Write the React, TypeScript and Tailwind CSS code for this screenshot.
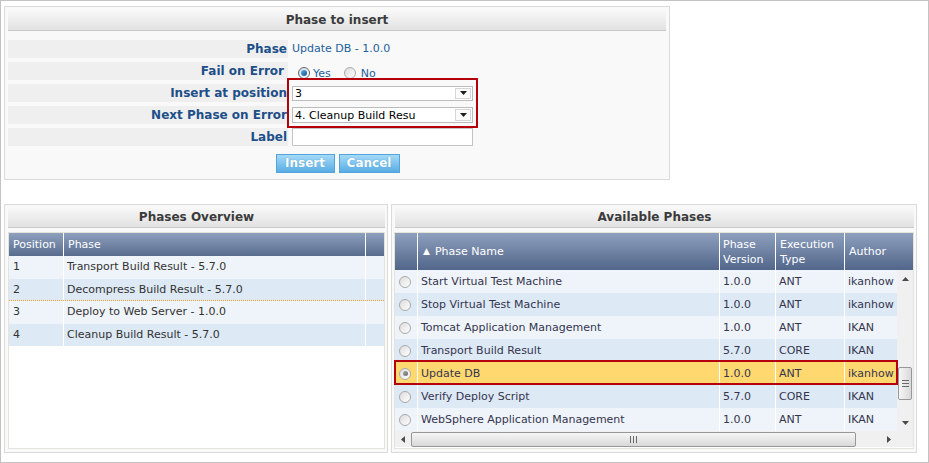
import React from 'react'

type Phase = { name: string; version: string; type: string; author: string; selected?: boolean }

const overview: [string, string][] = [
  ['1', 'Transport Build Result - 5.7.0'],
  ['2', 'Decompress Build Result - 5.7.0'],
  ['3', 'Deploy to Web Server - 1.0.0'],
  ['4', 'Cleanup Build Result - 5.7.0'],
]

const phases: Phase[] = [
  { name: 'Start Virtual Test Machine', version: '1.0.0', type: 'ANT', author: 'ikanhow' },
  { name: 'Stop Virtual Test Machine', version: '1.0.0', type: 'ANT', author: 'ikanhow' },
  { name: 'Tomcat Application Management', version: '1.0.0', type: 'ANT', author: 'IKAN' },
  { name: 'Transport Build Result', version: '5.7.0', type: 'CORE', author: 'IKAN' },
  { name: 'Update DB', version: '1.0.0', type: 'ANT', author: 'ikanhow', selected: true },
  { name: 'Verify Deploy Script', version: '5.7.0', type: 'CORE', author: 'IKAN' },
  { name: 'WebSphere Application Management', version: '1.0.0', type: 'ANT', author: 'IKAN' },
]

const PanelHeader: React.FC<{ title: string }> = ({ title }) => (
  <div className="h-[20px] shrink-0 border-b border-[#c8c8c8] bg-gradient-to-b from-[#f7f7f7] to-[#e2e2e2] text-center text-[12px] font-bold leading-[19px] text-[#3b3b3b]">
    {title}
  </div>
)

const Radio: React.FC<{ checked?: 'blue' | 'gray' }> = ({ checked }) => (
  <span
    className={
      checked === 'blue'
        ? 'flex size-[12px] shrink-0 items-center justify-center rounded-full border border-[#5b6470] bg-gradient-to-br from-[#d8dde3] to-white'
        : 'flex size-[12px] shrink-0 items-center justify-center rounded-full border border-[#a9a9a9] bg-gradient-to-br from-[#dcdcdc] to-white'
    }
  >
    {checked === 'blue' && <span className="size-[6px] rounded-full bg-gradient-to-br from-[#5fb3ec] to-[#11508f]" />}
    {checked === 'gray' && <span className="size-[5px] rounded-full bg-gradient-to-br from-[#a8a8a8] to-[#6b6b6b]" />}
  </span>
)

const Arrow: React.FC<{ dir: 'up' | 'down' | 'left' | 'right'; color?: string }> = ({ dir, color = '#4a4a4a' }) => {
  const d = {
    up: 'M3.5 0L7 4H0z',
    down: 'M0 0h7L3.5 4z',
    left: 'M4 0v7L0 3.5z',
    right: 'M0 0l4 3.5L0 7z',
  }[dir]
  const vertical = dir === 'up' || dir === 'down'
  return (
    <svg width={vertical ? 7 : 4} height={vertical ? 4 : 7} viewBox={vertical ? '0 0 7 4' : '0 0 4 7'}>
      <path d={d} fill={color} />
    </svg>
  )
}

const SelectBox: React.FC<{ value: string; h: string }> = ({ value, h }) => (
  <div className={`flex ${h} w-[181px] items-center border border-[#bcbcbc] bg-white`}>
    <span className="flex-1 pl-[2px] text-[11px] leading-[13px] text-black">{value}</span>
    <span className="mr-[1px] flex h-[calc(100%-2px)] w-[16px] items-center justify-center border border-[#d6d6d6] bg-[#fbfbfb]">
      <Arrow dir="down" color="#1e1e1e" />
    </span>
  </div>
)

const FormRow: React.FC<{ label: string; pr?: string; children: React.ReactNode }> = ({ label, pr = 'pr-[1px]', children }) => (
  <div className="flex h-[18px] gap-[3px]">
    <div className={`w-[280px] shrink-0 bg-[#efefef] text-right text-[12px] font-bold leading-[18px] text-[#1d4f88] ${pr}`}>{label}</div>
    <div className="flex flex-1 items-center pl-[1px]">{children}</div>
  </div>
)

const Button: React.FC<{ label: string; w: string }> = ({ label, w }) => (
  <button
    type="button"
    className={`h-[19px] ${w} border border-[#54a3da] bg-gradient-to-b from-[#a3daf7] to-[#58ade4] text-[12px] font-bold leading-[17px] text-white [text-shadow:0_0_1px_#3f8fc6]`}
  >
    {label}
  </button>
)

const PhaseToInsert: React.FC = () => (
  <div className="relative ml-[3px] mt-[5px] h-[174px] w-[666px] border border-[#dadada] bg-[#f9f9f9] px-[3px] pt-[4px]">
    <PanelHeader title="Phase to insert" />
    <div className="mt-[9px] flex flex-col gap-[4px]">
      <FormRow label="Phase">
        <span className="text-[11px] leading-[18px] text-[#23609c]">Update DB - 1.0.0</span>
      </FormRow>
      <FormRow label="Fail on Error" pr="pr-[4px]">
        <div className="flex h-full items-end text-[11px] text-[#23609c]">
          <span className="mb-[1px] ml-[6px]">
            <Radio checked="blue" />
          </span>
          <span className="ml-[3px] leading-[12px]">Yes</span>
          <span className="mb-[1px] ml-[13px]">
            <Radio />
          </span>
          <span className="ml-[5px] leading-[12px]">No</span>
        </div>
      </FormRow>
      <FormRow label="Insert at position">
        <SelectBox value="3" h="h-[15px]" />
      </FormRow>
      <FormRow label="Next Phase on Error">
        <SelectBox value="4. Cleanup Build Resu" h="h-[16px]" />
      </FormRow>
      <FormRow label="Label">
        <div className="h-[18px] w-[181px] border border-[#c4c4c4] bg-white" />
      </FormRow>
    </div>
    <div className="mt-[8px] flex justify-center gap-[4px] pl-[1px]">
      <Button label="Insert" w="w-[59px]" />
      <Button label="Cancel" w="w-[61px]" />
    </div>
    {/* highlight round the two drop-downs */}
    <div className="pointer-events-none absolute left-[282px] top-[71px] h-[50px] w-[191px] border-2 border-[#b3000b]" />
  </div>
)

const PhasesOverview: React.FC = () => (
  <div className="flex h-[249px] w-[384px] flex-col border border-[#dadada] bg-[#f9f9f9] pb-[3px] pl-[3px] pr-[2px] pt-[3px]">
    <PanelHeader title="Phases Overview" />
    <div className="mt-[4px] flex-1 border border-[#e4e4da] bg-white">
      <div className="flex h-[23px] bg-gradient-to-b from-[#8ea0be] to-[#586c8e] text-[11px] leading-[23px] text-white">
        <div className="w-[55px] border-r border-white pl-[4px]">Position</div>
        <div className="w-[302px] border-r border-white pl-[4px]">Phase</div>
        <div className="flex-1" />
      </div>
      {overview.map(([pos, name], i) => (
        <div
          key={pos}
          className={
            'flex h-[22.5px] text-[11px] leading-[22px] text-[#333] ' +
            (i % 2 === 0 ? 'bg-[#eff4fa] ' : 'bg-[#dde9f5] ') +
            (i === 1 ? 'border-b border-dotted border-[#eea232]' : '')
          }
        >
          <div className="w-[55px] border-r border-white pl-[4px]">{pos}</div>
          <div className="w-[302px] border-r border-white pl-[3px]">{name}</div>
          <div className="flex-1" />
        </div>
      ))}
    </div>
  </div>
)

const VScrollbar: React.FC = () => (
  <div className="flex w-[16px] shrink-0 flex-col bg-[#f0f0f0]">
    <div className="flex h-[17px] items-center justify-center">
      <Arrow dir="up" />
    </div>
    <div className="mx-[1px] mt-[80px] flex h-[33px] flex-col items-center justify-center gap-[2px] rounded-[2px] border border-[#979797] bg-gradient-to-r from-[#f6f6f6] to-[#d9d9d9]">
      <span className="h-px w-[7px] bg-[#6a6a6a]" />
      <span className="h-px w-[7px] bg-[#6a6a6a]" />
      <span className="h-px w-[7px] bg-[#6a6a6a]" />
    </div>
    <div className="flex-1" />
    <div className="flex h-[17px] items-center justify-center">
      <Arrow dir="down" />
    </div>
  </div>
)

const HScrollbar: React.FC = () => (
  <div className="flex h-[16px] flex-1 items-center bg-[#f0f0f0]">
    <div className="flex w-[16px] items-center justify-center">
      <Arrow dir="left" />
    </div>
    <div className="flex h-[15px] w-[445px] items-center justify-center gap-[2px] rounded-[2px] border border-[#979797] bg-gradient-to-b from-[#f6f6f6] to-[#d9d9d9]">
      <span className="h-[7px] w-px bg-[#6a6a6a]" />
      <span className="h-[7px] w-px bg-[#6a6a6a]" />
      <span className="h-[7px] w-px bg-[#6a6a6a]" />
    </div>
    <div className="flex-1" />
    <div className="flex w-[16px] items-center justify-center">
      <Arrow dir="right" />
    </div>
  </div>
)

const AvailablePhases: React.FC = () => (
  <div className="flex h-[249px] w-[526px] flex-col border border-[#dadada] bg-[#f9f9f9] px-[2px] pb-[3px] pt-[3px]">
    <div className="pl-[1px]">
      <PanelHeader title="Available Phases" />
    </div>
    <div className="mt-[4px] flex flex-1 flex-col border border-[#e4e4da] bg-white">
      <div className="flex h-[37px] bg-gradient-to-b from-[#8ea0be] to-[#52668a] text-[11px] leading-[15px] text-white">
        <div className="w-[23px] border-r border-white" />
        <div className="flex w-[302px] items-center border-r border-white pl-[5px]">
          <span className="mr-[5px] text-[9px]">▲</span>Phase Name
        </div>
        <div className="flex w-[56px] items-center border-r border-white pl-[3px]">
          Phase
          <br />
          Version
        </div>
        <div className="flex w-[69px] items-center border-r border-white pl-[4px]">
          Execution
          <br />
          Type
        </div>
        <div className="flex flex-1 items-center pl-[4px]">Author</div>
      </div>
      <div className="flex">
        <div className="flex w-[502px] flex-col">
          {phases.map((p, i) => (
            <div
              key={p.name}
              className={
                'relative flex h-[23px] text-[11px] leading-[23px] text-[#35354f] ' +
                (p.selected ? 'bg-[#ffd86f]' : i % 2 === 0 ? 'bg-[#eff4fa]' : 'bg-[#dde9f5]')
              }
            >
              <div className="flex w-[23px] items-center justify-center border-r border-white pr-[2px]">
                <Radio checked={p.selected ? 'gray' : undefined} />
              </div>
              <div className="w-[302px] border-r border-white pl-[3px]">{p.name}</div>
              <div className="w-[56px] border-r border-white pl-[3px]">{p.version}</div>
              <div className="w-[69px] border-r border-white pl-[3px]">{p.type}</div>
              <div className="flex-1 whitespace-nowrap pl-[3px]">{p.author}</div>
              {p.selected && (
                <div className="pointer-events-none absolute -left-[1px] -right-[1px] -top-[2px] bottom-0 border-2 border-[#b3000b]" />
              )}
            </div>
          ))}
        </div>
        <VScrollbar />
      </div>
      <div className="flex">
        <HScrollbar />
        <div className="h-[16px] w-[16px] bg-[#f0f0f0]" />
      </div>
    </div>
  </div>
)

const App: React.FC = () => {
  return (
    <div className="h-[463px] w-[929px] overflow-hidden border border-[#c3c3c3] bg-white font-['DejaVu_Sans',Verdana,sans-serif]">
      <PhaseToInsert />
      <div className="ml-[3px] mt-[24px] flex gap-[3px]">
        <PhasesOverview />
        <AvailablePhases />
      </div>
    </div>
  )
}

export default App
